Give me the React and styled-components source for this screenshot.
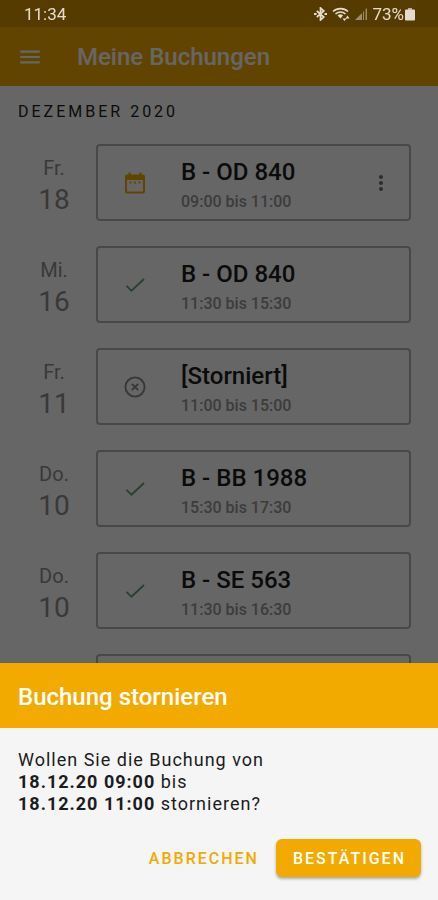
import React from "react";
import styled, { createGlobalStyle } from "styled-components";
import { MdMenu, MdMoreVert } from "react-icons/md";

const bookings = [
  { id: 1, day: "Fr.", date: "18", title: "B - OD 840", time: "09:00 bis 11:00", status: "planned" },
  { id: 2, day: "Mi.", date: "16", title: "B - OD 840", time: "11:30 bis 15:30", status: "done" },
  { id: 3, day: "Fr.", date: "11", title: "[Storniert]", time: "11:00 bis 15:00", status: "cancelled" },
  { id: 4, day: "Do.", date: "10", title: "B - BB 1988", time: "15:30 bis 17:30", status: "done" },
  { id: 5, day: "Do.", date: "10", title: "B - SE 563", time: "11:30 bis 16:30", status: "done" },
  { id: 6, status: "empty" },
];

const statusColors = {
  planned: "#f3aa00",
  done: "#6c9f76",
  cancelled: "#8a8a8a",
};

const PlannedIcon = () => (
  <svg width="24" height="24" viewBox="0 0 24 24" fill="currentColor">
    <path
      fillRule="evenodd"
      d="M5.500 1.500h2.200v2h8.600v-2h2.200v2H20a2 2 0 0 1 2 2V20.500a2 2 0 0 1-2 2H4a2 2 0 0 1-2-2V5.500a2 2 0 0 1 2-2h1.500zM4 9v11.500h16V9z"
    />
    <path d="M6.500 10.500h2v2h-2zM11 10.500h2v2h-2zM15.500 10.500h2v2h-2z" />
  </svg>
);

const DoneIcon = () => (
  <svg width="24" height="24" viewBox="0 0 24 24" fill="none" stroke="currentColor" strokeWidth="1.900">
    <path d="M3.500 12.800l5 5L21 6" />
  </svg>
);

const CancelledIcon = () => (
  <svg width="24" height="24" viewBox="0 0 24 24" fill="none" stroke="currentColor" strokeWidth="1.9">
    <circle cx="12" cy="12" r="9.6" />
    <path d="M8.800 8.800l6.400 6.400M15.200 8.800l-6.400 6.400" />
  </svg>
);

const StatusIcon = ({ status }) => {
  if (status === "planned") return <PlannedIcon />;
  if (status === "done") return <DoneIcon />;
  if (status === "cancelled") return <CancelledIcon />;
  return null;
};

const SystemIcons = () => (
  <SystemStatus>
    <svg width="13" height="14" viewBox="0 0 13 14" fill="none" stroke="currentColor" strokeWidth="1.700">
      <path d="M2.800 4l7 6L6.500 13V1l3.300 3-7 6" />
      <path d="M0 7h2.500M10.500 7H13" strokeWidth="2" />
    </svg>
    <svg width="18" height="14" viewBox="0 0 18 14" fill="none" stroke="currentColor" strokeWidth="1.6">
      <path d="M1 4.500C5 .6 12 .6 16 4.500M3.500 7C6.400 4.300 10.600 4.300 13.500 7" />
      <path d="M5.500 8.500C7.300 6.800 9.700 6.800 11 8.500L8.500 11.500Z" fill="currentColor" stroke="none" />
      <path d="M10.500 11.500h4L12.500 14zM13.500 11.500h4L15.500 8.500z" fill="currentColor" stroke="none" />
    </svg>
    <svg width="12" height="12" viewBox="0 0 12 12" fill="currentColor" opacity="0.5">
      <path d="M0 12L7 5v7zM8 4l1-1v9H8zM10.500 1.500L12 0v12h-1.500z" />
    </svg>
    <BatteryLevel>
      73%
      <svg width="10" height="14" viewBox="0 0 10 14" fill="currentColor">
        <path d="M3 1h4v2H3z" opacity="0.7" />
        <rect y="2.500" width="10" height="11" rx="1" />
      </svg>
    </BatteryLevel>
  </SystemStatus>
);

const Booking = ({ day, date, title, time, status }) => (
  <BookingRow>
    <BookingDate>
      <Weekday>{day}</Weekday>
      <DayNumber>{date}</DayNumber>
    </BookingDate>
    <BookingCard>
      <IconSlot $status={status}>
        <StatusIcon status={status} />
      </IconSlot>
      <BookingInfo>
        <BookingTitle>{title}</BookingTitle>
        <BookingTime>{time}</BookingTime>
      </BookingInfo>
      {status === "planned" && (
        <MoreButton type="button" aria-label="Optionen">
          <MdMoreVert size={24} />
        </MoreButton>
      )}
    </BookingCard>
  </BookingRow>
);

const App = () => (
  <>
    <GlobalStyle />
    <Screen>
      <StatusBar />
      <AppBar>
        <MenuButton type="button" aria-label="Menü">
          <MdMenu size={26} />
        </MenuButton>
        <AppTitle>Meine Buchungen</AppTitle>
      </AppBar>
      <Content>
        <Month>Dezember 2020</Month>
        <BookingList>
          {bookings.map((booking) => (
            <Booking key={booking.id} {...booking} />
          ))}
        </BookingList>
      </Content>
    </Screen>
    <Backdrop>
      <SystemBar>
        <span>11:34</span>
        <SystemIcons />
      </SystemBar>
      <Sheet role="dialog" aria-labelledby="sheet-title">
        <SheetTitle id="sheet-title">Buchung stornieren</SheetTitle>
        <SheetBody>
          <Message>
            Wollen Sie die Buchung von
            <br />
            <strong>18.12.20 09:00</strong> bis
            <br />
            <strong>18.12.20 11:00</strong> stornieren?
          </Message>
          <Actions>
            <Button type="button">Abbrechen</Button>
            <Button type="button" $primary>
              Bestätigen
            </Button>
          </Actions>
        </SheetBody>
      </Sheet>
    </Backdrop>
  </>
);

const GlobalStyle = createGlobalStyle`
  * {
    box-sizing: border-box;
  }

  body {
    margin: 0;

    font-family: Roboto, "Liberation Sans", sans-serif;
    color: #1c1c20;

    background-color: #ffffff;
  }

  button {
    padding: 0;

    font-family: inherit;
    color: inherit;

    background: none;
    border: none;
    cursor: pointer;
  }

  svg {
    display: block;
    flex-shrink: 0;
  }
`;

const Screen = styled.div`
  height: 100vh;
  overflow: hidden;
`;

const StatusBar = styled.div`
  height: 27px;

  background-color: #d89500;
`;

const AppBar = styled.header`
  display: flex;
  align-items: center;
  gap: 34px;
  height: 59px;
  padding: 0 17px;

  color: #ffffff;

  background-color: #f3aa00;
`;

const MenuButton = styled.button`
  display: flex;
`;

const AppTitle = styled.h1`
  margin: 0;

  font-size: 24px;
  font-weight: 500;
  line-height: 32px;
`;

const Content = styled.main`
  padding: 16px 27px 0 18px;
`;

const Month = styled.h2`
  margin: 0 0 22px;

  font-size: 16px;
  font-weight: 400;
  line-height: 20px;
  letter-spacing: 3px;
  text-transform: uppercase;
`;

const BookingList = styled.ul`
  display: flex;
  flex-direction: column;
  gap: 25px;
  margin: 0;
  padding: 0;

  list-style: none;
`;

const BookingRow = styled.li`
  display: flex;
  height: 77px;
`;

const BookingDate = styled.div`
  width: 78px;
  padding: 11px 6px 0 0;

  color: #8f8f8f;
  text-align: center;
`;

const Weekday = styled.div`
  font-size: 20px;
  line-height: 26px;
`;

const DayNumber = styled.div`
  font-size: 28px;
  line-height: 38px;
`;

const BookingCard = styled.article`
  display: flex;
  flex: 1;
  align-items: center;
  padding: 0 16px 0 25px;

  border: 2px solid #b4b4b4;
  border-radius: 4px;
`;

const IconSlot = styled.div`
  width: 58px;

  color: ${({ $status }) => statusColors[$status]};
`;

const BookingInfo = styled.div`
  flex: 1;
  padding-top: 8px;
`;

const BookingTitle = styled.h3`
  margin: 0;

  font-size: 24px;
  font-weight: 500;
  line-height: 30px;
`;

const BookingTime = styled.div`
  font-size: 16px;
  font-weight: 500;
  line-height: 30px;
  color: #979797;
`;

const MoreButton = styled.button`
  color: #707070;
`;

const Backdrop = styled.div`
  position: fixed;
  inset: 0;
  display: flex;
  flex-direction: column;
  justify-content: space-between;

  background-color: rgba(0, 0, 0, 0.6);
`;

const SystemBar = styled.div`
  display: flex;
  align-items: center;
  justify-content: space-between;
  height: 28px;
  padding: 0 23px 0 24px;

  font-size: 17px;
  color: #e6dccb;
`;

const SystemStatus = styled.div`
  display: flex;
  align-items: center;
  gap: 5px;
`;

const BatteryLevel = styled.span`
  display: flex;
  align-items: center;
  gap: 1px;
`;

const Sheet = styled.section`
  background-color: #f5f5f5;
`;

const SheetTitle = styled.h2`
  margin: 0;
  padding: 18px 18px 15px;

  font-size: 24px;
  font-weight: 500;
  line-height: 32px;
  color: #ffffff;

  background-color: #f3aa00;
`;

const SheetBody = styled.div`
  padding: 21px 17px 23px 18px;
`;

const Message = styled.p`
  margin: 0 0 24px;

  font-size: 18px;
  line-height: 22px;
  letter-spacing: 1px;

  strong {
    font-weight: 700;
  }
`;

const Actions = styled.div`
  display: flex;
  gap: 2px;
  justify-content: flex-end;
`;

const Button = styled.button`
  && {
    height: 38px;
    padding: 0 15px 0 17px;

    font-size: 16px;
    font-weight: 500;
    letter-spacing: 2px;
    text-transform: uppercase;
    color: ${({ $primary }) => ($primary ? "#ffffff" : "#f3aa00")};

    background-color: ${({ $primary }) => ($primary ? "#f3aa00" : "transparent")};
    border-radius: 6px;
    box-shadow: ${({ $primary }) =>
      $primary ? "0 2px 3px rgba(0, 0, 0, 0.3)" : "none"};
  }
`;

export default App;
